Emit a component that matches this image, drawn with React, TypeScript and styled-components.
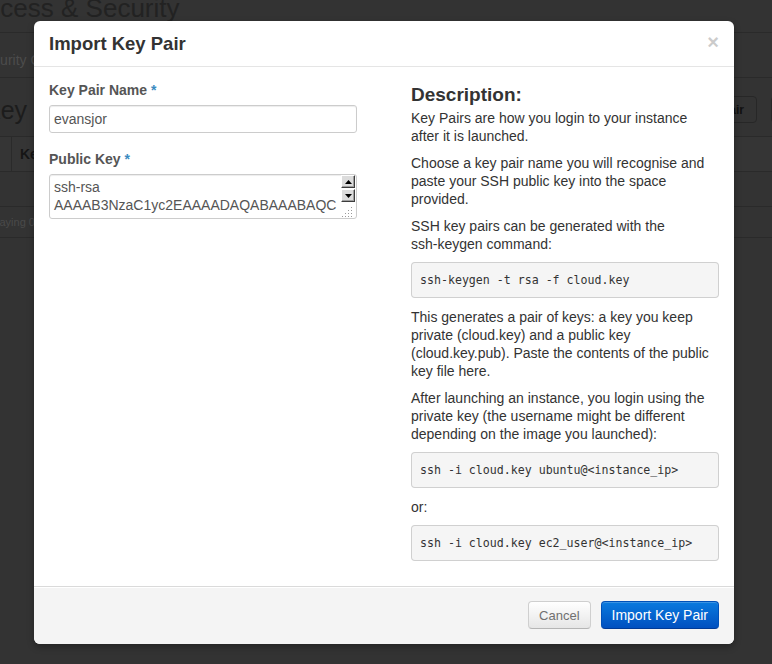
import React from "react";
import styled, { createGlobalStyle } from "styled-components";

const GlobalStyle = createGlobalStyle`
  html, body { margin: 0; padding: 0; background: #333; overflow: hidden; }
  body { font-family: "Liberation Sans", Arial, Helvetica, sans-serif; }
  #root { width: 772px; height: 664px; position: relative; overflow: hidden; }
`;

/* ---------- dimmed page behind the dialog ---------- */
const Backdrop = styled.div`
  width: 931px;
  margin-left: -30px;
  font-family: "Liberation Sans", Arial, sans-serif;
`;

const PageHeader = styled.div`
  height: 32px;
  border-bottom: 1px solid #2a2a2a;
  overflow: hidden;
`;

const PageTitle = styled.h1`
  margin: -5px 0 0;
  font-size: 26px;
  line-height: 26px;
  font-weight: normal;
  color: #222;
`;

const Tabs = styled.div`
  height: 44px;
  border-bottom: 1px solid #2a2a2a;
  display: flex;
  padding-left: 6px;
`;

const Tab = styled.span`
  padding-top: 17px;
  font-size: 14px;
  line-height: 20px;
  color: #4c4c4c;
`;

const SectionRow = styled.div`
  height: 58px;
  display: flex;
  align-items: flex-start;
  padding-left: 14px;
  padding-right: 10px;
`;

const SectionTitle = styled.h2`
  margin: 18px 0 0;
  font-size: 25px;
  line-height: 28px;
  font-weight: normal;
  color: #1c1c1c;
`;

const Toolbar = styled.div`
  margin-left: auto;
  margin-top: 18px;
  display: flex;
  gap: 14px;
`;

const PageButton = styled.span`
  height: 27px;
  box-sizing: border-box;
  padding: 0 12px;
  display: flex;
  align-items: center;
  border: 1px solid #272727;
  border-radius: 4px;
  font-size: 12px;
  font-weight: bold;
  color: #111;
`;

const Table = styled.div`
  border-top: 1px solid #2a2a2a;
`;

const TableRow = styled.div<{ $head?: boolean; $h: number }>`
  height: ${(p) => p.$h}px;
  display: flex;
  border-bottom: 1px solid #2a2a2a;
  background: ${(p) => (p.$head ? "#353535" : "transparent")};
`;

const CheckCell = styled.div`
  width: 41px;
  border-right: 1px solid #2a2a2a;
`;

const HeadCell = styled.div`
  padding: 0 8px;
  display: flex;
  align-items: center;
  font-size: 14px;
  font-weight: bold;
  color: #151515;
`;

const FootCell = styled.div`
  padding: 0 5px;
  display: flex;
  align-items: center;
  font-size: 11px;
  color: #4a4a4a;
`;

/* ---------- dialog ---------- */
const Modal = styled.div`
  position: absolute;
  top: 21px;
  left: 34px;
  width: 700px;
  background: #fff;
  border-radius: 6px;
  box-shadow: 0 3px 7px rgba(0, 0, 0, 0.3);
  display: flex;
  flex-direction: column;
  overflow: hidden;
  color: #333;
`;

const ModalHeader = styled.div`
  height: 45px;
  padding: 0 15px;
  border-bottom: 1px solid #e5e5e5;
  display: flex;
  align-items: center;
  justify-content: space-between;
`;

const ModalTitle = styled.h3`
  margin: 0;
  font-size: 18.5px;
  font-weight: bold;
  color: #333;
`;

const Close = styled.span`
  margin-top: -3px;
  font-size: 20px;
  line-height: 20px;
  font-weight: bold;
  color: #000;
  opacity: 0.2;
`;

const ModalBody = styled.div`
  display: grid;
  grid-template-columns: 1fr 1fr;
  column-gap: 54px;
  align-items: start;
  padding: 14px 15px 15px;
`;

const Column = styled.div`
  display: flex;
  flex-direction: column;
`;

const Label = styled.label`
  display: block;
  margin-bottom: 6px;
  font-size: 14px;
  line-height: 18px;
  font-weight: bold;
  color: #555;
`;

const Required = styled.span`
  color: #3a8bc0;
`;

const TextInput = styled.div`
  height: 28px;
  box-sizing: border-box;
  margin-bottom: 17px;
  padding: 0 4px;
  display: flex;
  align-items: center;
  border: 1px solid #ccc;
  border-radius: 3px;
  box-shadow: inset 0 1px 1px rgba(0, 0, 0, 0.075);
  font-size: 14px;
  color: #555;
`;

const TextArea = styled.div`
  height: 45px;
  box-sizing: border-box;
  display: flex;
  border: 1px solid #ccc;
  border-radius: 3px;
  box-shadow: inset 0 1px 1px rgba(0, 0, 0, 0.075);
  overflow: hidden;
`;

const TextAreaText = styled.div`
  flex: 1;
  padding: 3px 4px;
  font-size: 14px;
  line-height: 18px;
  color: #555;
  white-space: pre;
  overflow: hidden;
`;

const ScrollCol = styled.div`
  width: 15px;
  display: flex;
  flex-direction: column;
  align-items: flex-start;
`;

const ScrollBtn = styled.span`
  width: 14px;
  height: 13px;
  box-sizing: border-box;
  margin-bottom: 1px;
  display: flex;
  align-items: center;
  justify-content: center;
  background: #dcdcdc;
  border: 1px solid;
  border-color: #fff #3c3c3c #3c3c3c #fff;
  box-shadow: inset -1px -1px 0 #a0a0a0;
`;

const Grip = styled.svg`
  margin-top: auto;
  margin-bottom: 1px;
`;

const DescTitle = styled.h3`
  margin: 4px 0 4px;
  font-size: 19px;
  line-height: 20px;
  font-weight: bold;
  color: #333;
`;

const Para = styled.p`
  margin: 0 0 9px;
  font-size: 14px;
  line-height: 18px;
  color: #333;
`;

const NoWrap = styled.span`
  white-space: nowrap;
`;

const Code = styled.pre`
  margin: 0 0 10px;
  padding: 9px 8px;
  font-family: "DejaVu Sans Mono", "Liberation Mono", monospace;
  font-size: 11.6px;
  line-height: 16px;
  color: #333;
  background: #f5f5f5;
  border: 1px solid rgba(0, 0, 0, 0.15);
  border-radius: 4px;
  white-space: pre;
`;

const ModalFooter = styled.div`
  padding: 14px 15px 15px;
  display: flex;
  justify-content: flex-end;
  gap: 10px;
  background: #f4f4f4;
  border-top: 1px solid #dadada;
  box-shadow: inset 0 1px 0 #fff;
`;

const Button = styled.button<{ $primary?: boolean }>`
  height: 28px;
  box-sizing: border-box;
  padding: 0 10px;
  border-radius: 4px;
  font-family: "Liberation Sans", Arial, sans-serif;
  font-size: ${(p) => (p.$primary ? "14px" : "13px")};
  color: ${(p) => (p.$primary ? "#fff" : "#707070")};
  background: ${(p) =>
    p.$primary
      ? "linear-gradient(#0a7ade, #0050c0)"
      : "linear-gradient(#ffffff, #e6e6e6)"};
  border: 1px solid;
  border-color: ${(p) =>
    p.$primary ? "#0050b8 #0050b8 #003a96" : "#cfcfcf #cfcfcf #b5b5b5"};
  box-shadow: inset 0 1px 0 rgba(255, 255, 255, 0.2);
  cursor: pointer;
`;

const Triangle = ({ up }: { up?: boolean }) => (
  <svg width="7" height="4" viewBox="0 0 7 4">
    <polygon points={up ? "3.5,0 7,4 0,4" : "0,0 7,0 3.5,4"} fill="#000" />
  </svg>
);

export default function App() {
  return (
    <>
      <GlobalStyle />
      <Backdrop>
        <PageHeader>
          <PageTitle>Access &amp; Security</PageTitle>
        </PageHeader>
        <Tabs>
          <Tab>Security Groups</Tab>
        </Tabs>
        <SectionRow>
          <SectionTitle>Key Pairs</SectionTitle>
          <Toolbar>
            <PageButton>Create Key Pair</PageButton>
            <PageButton>Import Key Pair</PageButton>
            <PageButton>Delete Key Pairs</PageButton>
          </Toolbar>
        </SectionRow>
        <Table>
          <TableRow $head $h={34}>
            <CheckCell />
            <HeadCell>Key Pair Name</HeadCell>
          </TableRow>
          <TableRow $h={34} />
          <TableRow $h={30}>
            <FootCell>Displaying 0 items</FootCell>
          </TableRow>
        </Table>
      </Backdrop>

      <Modal>
        <ModalHeader>
          <ModalTitle>Import Key Pair</ModalTitle>
          <Close>×</Close>
        </ModalHeader>
        <ModalBody>
          <Column>
            <Label>
              Key Pair Name <Required>*</Required>
            </Label>
            <TextInput>evansjor</TextInput>
            <Label>
              Public Key <Required>*</Required>
            </Label>
            <TextArea>
              <TextAreaText>{"ssh-rsa\nAAAAB3NzaC1yc2EAAAADAQABAAABAQC"}</TextAreaText>
              <ScrollCol>
                <ScrollBtn>
                  <Triangle up />
                </ScrollBtn>
                <ScrollBtn>
                  <Triangle />
                </ScrollBtn>
                <Grip width="12" height="11" viewBox="0 0 12 11">
                  {[
                    [10, 1], [10, 4], [7, 4], [10, 7], [7, 7], [4, 7],
                    [10, 10], [7, 10], [4, 10], [1, 10],
                  ].map(([x, y]) => (
                    <rect key={`${x}-${y}`} x={x} y={y} width="1" height="1" fill="#9a9a9a" />
                  ))}
                </Grip>
              </ScrollCol>
            </TextArea>
          </Column>
          <Column>
            <DescTitle>Description:</DescTitle>
            <Para>Key Pairs are how you login to your instance after it is launched.</Para>
            <Para>
              Choose a key pair name you will recognise and paste your SSH public key into the space
              provided.
            </Para>
            <Para>
              SSH key pairs can be generated with the <NoWrap>ssh-keygen</NoWrap> command:
            </Para>
            <Code>ssh-keygen -t rsa -f cloud.key</Code>
            <Para>
              This generates a pair of keys: a key you keep private (cloud.key) and a public key
              (cloud.key.pub). Paste the contents of the public key file here.
            </Para>
            <Para>
              After launching an instance, you login using the private key (the username might be
              different depending on the image you launched):
            </Para>
            <Code>{"ssh -i cloud.key ubuntu@<instance_ip>"}</Code>
            <Para>or:</Para>
            <Code>{"ssh -i cloud.key ec2_user@<instance_ip>"}</Code>
          </Column>
        </ModalBody>
        <ModalFooter>
          <Button>Cancel</Button>
          <Button $primary>Import Key Pair</Button>
        </ModalFooter>
      </Modal>
    </>
  );
}
